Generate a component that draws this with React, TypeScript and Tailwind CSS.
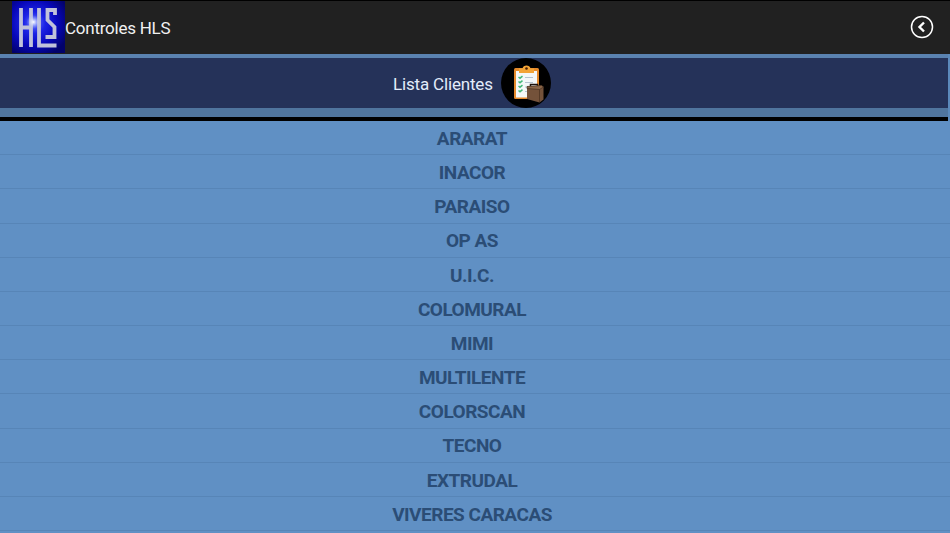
const clients = [
  'ARARAT',
  'INACOR',
  'PARAISO',
  'OP AS',
  'U.I.C.',
  'COLOMURAL',
  'MIMI',
  'MULTILENTE',
  'COLORSCAN',
  'TECNO',
  'EXTRUDAL',
  'VIVERES CARACAS',
];

function Logo() {
  return (
    <svg className="h-[52px] w-[53px] shrink-0" viewBox="0 0 53 52" role="img" aria-label="HLS">
      <defs>
        <radialGradient id="glow" cx="0.42" cy="0.42" r="0.68">
          <stop offset="0" stopColor="#6675ff" />
          <stop offset="0.3" stopColor="#1c23e6" />
          <stop offset="0.65" stopColor="#0707b8" />
          <stop offset="1" stopColor="#02026a" />
        </radialGradient>
        <radialGradient id="shine">
          <stop offset="0" stopColor="#ffffff" />
          <stop offset="1" stopColor="#9fb4ff" stopOpacity="0" />
        </radialGradient>
      </defs>
      <rect width="53" height="52" fill="url(#glow)" />
      <g fill="none" stroke="#c0c2da" strokeWidth="3.8">
        <path d="M9 7V46M19 7V46M9 26.500H19" />
        <path d="M27 7V44.500H44.500" />
        <path d="M43 14V9H35.500V19L42.500 26V36H33.500" />
      </g>
      <circle cx="21.5" cy="21" r="7" fill="url(#shine)" />
    </svg>
  );
}

function ClipboardBadge() {
  return (
    <svg className="h-[50px] w-[50px] shrink-0" viewBox="0 0 50 50">
      <circle cx="25" cy="25" r="25" fill="#000" />
      <rect x="13" y="10" width="25" height="31" rx="1.5" fill="#e58a2b" />
      <rect x="15" y="13" width="21" height="26.500" fill="#f4f8f8" />
      <path d="M18 15V10.500H21.500C22 6.500 29 6.500 29.500 10.500H33V15Z" fill="#f3a436" />
      <circle cx="25.5" cy="10.500" r="1.3" fill="#4a2105" />
      <g fill="none" stroke="#45b978" strokeWidth="1.5">
        <path d="M17.500 19l1.500 1.200 2.500-2M17.500 23.500l1.500 1.200 2.500-2M17.500 28l1.500 1.200 2.500-2M17.500 32.500l1.500 1.200 2.500-2" />
      </g>
      <path d="M24 19.500h8M24 24.500h8M24 29h3M24 33.500h2" stroke="#b4c4d0" />
      <path d="M29.500 29v-2.500h7V29" fill="none" stroke="#1d130d" strokeWidth="1.500" />
      <path d="M26 28.500L40.500 27.500L42.500 29V41.500L38.500 44.500L26 41Z" fill="#74523a" />
      <path d="M26 28.500L40.500 27.500L42.500 29L38.500 31.500L26 30.500ZM38.500 31.500V44" fill="#8a6648" stroke="#48301f" strokeWidth="0.700" />
    </svg>
  );
}

export default function App() {
  return (
    <div className="flex h-[533px] w-[950px] flex-col overflow-hidden bg-[#6090c4] font-['Roboto','Liberation_Sans',sans-serif]">
      <header className="flex h-[54px] shrink-0 items-start border-t border-black bg-[#212121] pl-3">
        <Logo />
        <h1 className="mt-[15px] text-[17px] leading-6 tracking-[-0.25px] text-[#f1f1f1]">Controles HLS</h1>
        <button aria-label="Volver" className="mt-[14px] mr-[16px] ml-auto h-6 w-6">
          <svg viewBox="0 0 24 24" className="h-6 w-6" fill="none" stroke="#fff">
            <circle cx="12" cy="12" r="10.500" strokeWidth="1.500" />
            <path d="M14 7.500L9.500 12L14 16.500" strokeWidth="2.400" />
          </svg>
        </button>
      </header>
      <section className="flex h-[67px] shrink-0 flex-col bg-[#5b89bb] pr-[2px]">
        <div className="h-1 shrink-0 bg-[#5a82b0]" />
        <div className="flex h-[50px] shrink-0 items-center bg-[#253259] pl-[393px]">
          <h2 className="w-[108px] pt-[2px] text-[17px] leading-6 tracking-[-0.170px] text-[#e3ecfa]">Lista Clientes</h2>
          <ClipboardBadge />
        </div>
        <div className="h-[9px] shrink-0 bg-[#50759e]" />
        <div className="h-1 shrink-0 bg-black" />
      </section>
      <ul className="flex shrink-0 flex-col">
        {clients.map((name) => (
          <li
            key={name}
            className="flex h-[34.180px] items-center justify-center border-b border-[#5785b7] pt-[3px] pr-[6px] text-[19px] font-bold tracking-[-0.500px] text-[#2b4d76]"
          >
            {name}
          </li>
        ))}
      </ul>
    </div>
  );
}
